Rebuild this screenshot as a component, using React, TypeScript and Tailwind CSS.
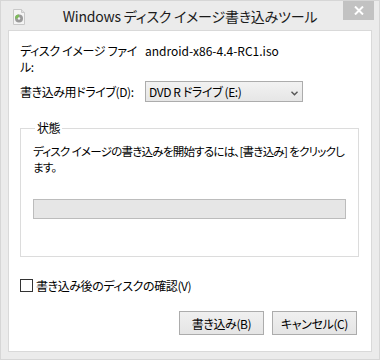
const font = "[font-family:'Noto_Sans_CJK_JP',sans-serif] [font-feature-settings:'palt']";

const DiskIcon = () => (
  <svg width="14" height="16" viewBox="0 0 14 16" className="absolute left-[11px] top-[8px]">
    <path d="M1.5 0.5h8l3 3v12h-11z" fill="#f4f4f4" stroke="#c8c8c8" />
    <path d="M9.5 0.5v3h3" fill="#e0e0e0" stroke="#c8c8c8" />
    <circle cx="7" cy="9.5" r="4" fill="#9a9a9a" />
    <path d="M7 5.5a4 4 0 0 0-4 4h4z" fill="#7dbb5a" />
    <circle cx="7" cy="9.5" r="1.2" fill="#f4f4f4" />
  </svg>
);

const Chevron = () => (
  <svg width="7" height="5" viewBox="0 0 7 5" className="absolute right-[4px] top-[9px]">
    <path d="M0.5 0.8l3 3 3-3" fill="none" stroke="#555" strokeWidth="1.4" />
  </svg>
);

export default function App() {
  return (
    <div className={`w-[380px] h-[360px] bg-[#ebebeb] border border-[#d6d6d6] flex flex-col text-black ${font}`}>
      <div className="relative h-[29px] shrink-0">
        <DiskIcon />
        <div className="absolute inset-x-0 top-[6px] text-center text-[14px] leading-[18px] tracking-[-0.2px] text-[#1a1a1a]">
          Windows ディスク イメージ書き込みツール
        </div>
        <div className="absolute right-[5px] top-0 w-[31px] h-[19px] bg-[#c2c2c2] flex items-center justify-center">
          <svg width="10" height="9" viewBox="0 0 10 9">
            <path d="M1 0.5l8 8M9 0.5l-8 8" stroke="#fff" strokeWidth="2" />
          </svg>
        </div>
      </div>

      <div className="mx-[7px] h-[322px] bg-white border border-[#d9d9d9] flex flex-col pl-[11px] pr-[12px] text-[12px] leading-[15px] tracking-[-0.4px]">
        <div className="flex mt-[12px]">
          <div className="w-[125px] shrink-0 leading-[16px]">
            ディスク{"\u2005"}イメージ{"\u2005"}ファイ
            <br />
            ル:
          </div>
          <div className="tracking-normal leading-[16px]">android-x86-4.4-RC1.iso</div>
        </div>

        <div className="flex items-center mt-[6px]">
          <div className="w-[125px] shrink-0">書き込み用ドライブ(D):</div>
          <div className="relative w-[158px] h-[21px] border border-[#acacac] bg-gradient-to-b from-[#f2f2f2] to-[#e6e6e6] pl-[3px] leading-[19px]">
            DVD R ドライブ (E:)
            <Chevron />
          </div>
        </div>

        <fieldset className="mt-[19px] h-[136px] min-w-0 border border-[#dcdcdc] px-[12px] pt-[8px]">
          <legend className="ml-[2px] px-[2px] leading-[14px]">状態</legend>
          <div className="leading-[16px] whitespace-nowrap text-[11.5px] tracking-[-0.75px]">
            ディスク{"\u2005"}イメージの書き込みを開始するには、[書き込み]{"\u2005"}をクリックし
            <br />
            ます。
          </div>
          <div className="mt-[24px] h-[20px] border border-[#bcbcbc] bg-[#e6e6e6]" />
        </fieldset>

        <label className="flex items-center mt-[21px]">
          <span className="w-[13px] h-[13px] border border-[#333] bg-white shrink-0" />
          <span className="ml-[3px]">書き込み後のディスクの確認(V)</span>
        </label>

        <div className="flex justify-end gap-[8px] mt-[18px] pr-[2px]">
          <button className="w-[85px] h-[24px] border border-[#acacac] bg-gradient-to-b from-[#f0f0f0] to-[#e5e5e5] text-[12px]">
            書き込み(B)
          </button>
          <button className="w-[85px] h-[24px] border border-[#acacac] bg-gradient-to-b from-[#f0f0f0] to-[#e5e5e5] text-[12px]">
            キャンセル(C)
          </button>
        </div>
      </div>
    </div>
  );
}
